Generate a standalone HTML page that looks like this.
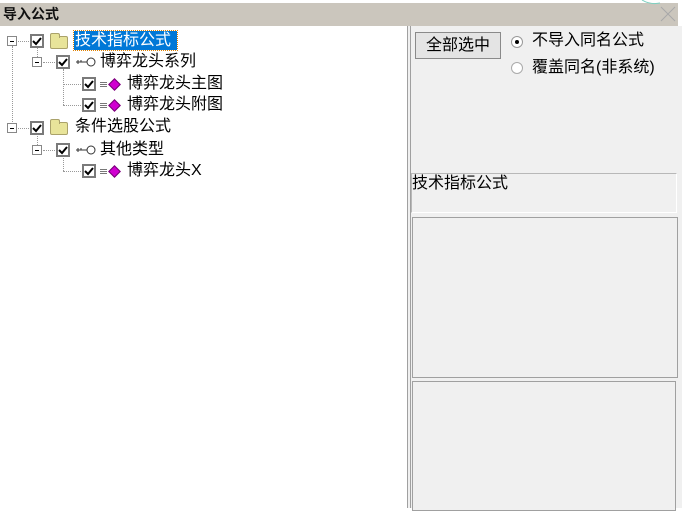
<!DOCTYPE html>
<html><head><meta charset="utf-8"><style>
*{margin:0;padding:0;box-sizing:border-box}
body{width:689px;height:508px;position:relative;background:#fff;overflow:hidden;font-family:"Liberation Sans","Noto Sans CJK SC","WenQuanYi Zen Hei",sans-serif;font-size:16px;color:#000}
.a{position:absolute}
.tb{left:0;top:3px;width:678px;height:23px;background:#cbc6bd}
.tb span{position:absolute;left:3px;top:1px;font-weight:bold;font-size:14px;color:#111}
.exp{position:absolute;width:10px;height:10px;border:1px solid #888;background:#fff}
.exp:after{content:"";position:absolute;left:2px;top:3.5px;width:4px;height:1px;background:#000}
.cb{position:absolute;width:14px;height:14px;border:2px solid #7a7a7a;background:#fff}
.vl{position:absolute;border-left:1px dotted #999;width:0}
.hl{position:absolute;border-top:1px dotted #999;height:0}
.t{position:absolute;line-height:20px;white-space:nowrap}
.fold{position:absolute;width:18px;height:13px;background:#e8e49a;border:1px solid #aaa26a;border-radius:2px}
.fold:before{content:"";position:absolute;left:-1px;top:-4px;width:8px;height:4px;background:#e8e49a;border:1px solid #aaa26a;border-bottom:none;border-radius:2px 2px 0 0}
.gem{position:absolute;width:9px;height:9px;background:#d000d0;transform:rotate(45deg);border:1px solid #700070}
.eq{position:absolute;width:7px;height:5px;border-top:1px solid #777;border-bottom:1px solid #777}
.eq:after{content:"";position:absolute;left:0;top:1px;width:7px;border-top:1px solid #777}
</style></head><body>
<div class="a tb"><span>导入公式</span></div>
<svg class="a" style="left:659px;top:5px" width="18" height="18"><path d="M2 2L16 16M16 2L2 16" stroke="#a8a8a8" stroke-width="1" fill="none"/></svg>
<svg class="a" style="left:640px;top:0" width="30" height="6"><path d="M2 0Q10 5 20 3" stroke="#7cd0c0" fill="none"/></svg>

<div class="vl" style="left:12px;top:46px;height:82px"></div>
<div class="hl" style="left:18px;top:41px;width:11px"></div>
<div class="hl" style="left:18px;top:128px;width:11px"></div>
<div class="vl" style="left:37px;top:47px;height:10px"></div>
<div class="hl" style="left:43px;top:62px;width:12px"></div>
<div class="vl" style="left:37px;top:134px;height:11px"></div>
<div class="hl" style="left:43px;top:150px;width:12px"></div>
<div class="vl" style="left:63px;top:69px;height:36px"></div>
<div class="hl" style="left:63px;top:84px;width:18px"></div>
<div class="hl" style="left:63px;top:105px;width:18px"></div>
<div class="vl" style="left:63px;top:156px;height:15px"></div>
<div class="hl" style="left:63px;top:171px;width:18px"></div>

<div class="exp" style="left:7px;top:36px"></div>
<div class="cb" style="left:30px;top:34px"></div>
<div class="fold" style="left:50px;top:36px"></div>
<div class="t" style="left:74px;top:31px;height:19px;width:103px;background:#0078d7;color:#fff;outline:1px dotted #e08000;padding-left:1px">技术指标公式</div>
<div class="exp" style="left:32px;top:57px"></div>
<div class="cb" style="left:56px;top:55px"></div>
<svg class="a" style="left:75px;top:55px" width="22" height="14"><path d="M1 7H12M3 5V9M6 5V7" stroke="#333" fill="none"/><circle cx="16" cy="7" r="4" stroke="#333" fill="#fff"/></svg>
<div class="t" style="left:100px;top:52px">博弈龙头系列</div>
<div class="cb" style="left:82px;top:77px"></div>
<div class="eq" style="left:100px;top:82px"></div>
<div class="gem" style="left:110px;top:80px"></div>
<div class="t" style="left:127px;top:74px">博弈龙头主图</div>
<div class="cb" style="left:82px;top:98px"></div>
<div class="eq" style="left:100px;top:103px"></div>
<div class="gem" style="left:110px;top:101px"></div>
<div class="t" style="left:127px;top:95px">博弈龙头附图</div>
<div class="exp" style="left:7px;top:123px"></div>
<div class="cb" style="left:30px;top:121px"></div>
<div class="fold" style="left:50px;top:122px"></div>
<div class="t" style="left:75px;top:117px">条件选股公式</div>
<div class="exp" style="left:32px;top:145px"></div>
<div class="cb" style="left:56px;top:143px"></div>
<svg class="a" style="left:75px;top:143px" width="22" height="14"><path d="M1 7H12M3 5V9M6 5V7" stroke="#333" fill="none"/><circle cx="16" cy="7" r="4" stroke="#333" fill="#fff"/></svg>
<div class="t" style="left:100px;top:140px">其他类型</div>
<div class="cb" style="left:82px;top:164px"></div>
<div class="eq" style="left:100px;top:169px"></div>
<div class="gem" style="left:110px;top:167px"></div>
<div class="t" style="left:127px;top:161px">博弈龙头X</div>

<svg class="a" style="left:0;top:0;pointer-events:none" width="200" height="200">
<g stroke="#000" stroke-width="2" fill="none">
<path d="M33 41l3 3 5-6"/><path d="M59 62l3 3 5-6"/><path d="M85 84l3 3 5-6"/><path d="M85 105l3 3 5-6"/>
<path d="M33 128l3 3 5-6"/><path d="M59 150l3 3 5-6"/><path d="M85 171l3 3 5-6"/>
</g></svg>

<div class="a" style="left:407px;top:26px;width:4px;height:482px;border-left:1px solid #a0a0a0;border-right:1px solid #a0a0a0;background:#f0f0f0"></div>
<div class="a" style="left:411px;top:26px;width:271px;height:482px;background:#f0f0f0"></div>
<div class="a" style="left:415px;top:32px;width:86px;height:27px;background:#e4e4e4;border:1px solid #8a8a8a;text-align:center;line-height:25px">全部选中</div>
<div class="a" style="left:511px;top:36px;width:12px;height:12px;border-radius:50%;background:#fff;border:1px solid #999"></div>
<div class="a" style="left:515px;top:40px;width:4px;height:4px;border-radius:50%;background:#000"></div>
<div class="t" style="left:532px;top:31px">不导入同名公式</div>
<div class="a" style="left:511px;top:62px;width:12px;height:12px;border-radius:50%;background:#fff;border:1px solid #aaa"></div>
<div class="t" style="left:532px;top:58px">覆盖同名(非系统)</div>
<div class="a" style="left:411px;top:173px;width:266px;height:40px;border:1px solid #b8b8b8;border-right-color:#fff;border-bottom-color:#fff"></div>
<div class="t" style="left:412px;top:174px">技术指标公式</div>
<div class="a" style="left:412px;top:217px;width:266px;height:161px;border:1px solid #a0a0a0;background:#f0f0f0"></div>
<div class="a" style="left:412px;top:381px;width:264px;height:130px;border:1px solid #a0a0a0;background:#f0f0f0"></div>
</body></html>
